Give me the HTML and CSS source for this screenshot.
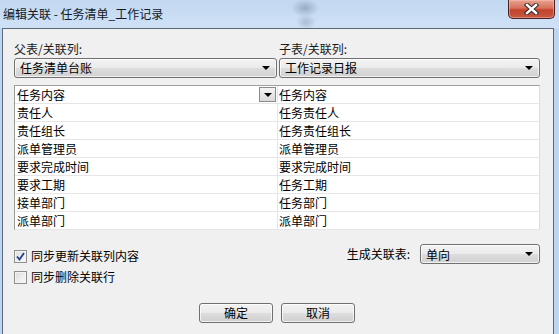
FILE: index.html
```html
<!DOCTYPE html>
<html lang="zh-CN">
<head>
  <meta charset="UTF-8" />
  <title>编辑关联</title>
  <link rel="stylesheet" href="styles.css">
</head>
<body>
  <div class="window">
    <div class="titlebar">
      <span class="title">编辑关联 - 任务清单_工作记录</span>
      <button class="close">
        <svg width="17" height="12" viewBox="0 0 17 12">
          <path d="M4 2 L13 10 M13 2 L4 10" stroke="#3a2a2a" stroke-width="4.4" stroke-linecap="square"/>
          <path d="M4 2 L13 10 M13 2 L4 10" stroke="#fff" stroke-width="2.4" stroke-linecap="square"/>
        </svg>
      </button>
    </div>

    <div class="client">
      <div class="pick">
        <div class="pick-col">
          <div class="lbl">父表/关联列:</div>
          <div class="combo"><span>任务清单台账</span><i class="arrow"></i></div>
        </div>
        <div class="pick-col">
          <div class="lbl">子表/关联列:</div>
          <div class="combo"><span>工作记录日报</span><i class="arrow"></i></div>
        </div>
      </div>

      <div class="map">
        <div class="cell first">任务内容<span class="mini"><i class="arrow"></i></span></div><div class="cell">任务内容</div>
        <div class="cell">责任人</div><div class="cell">任务责任人</div>
        <div class="cell">责任组长</div><div class="cell">任务责任组长</div>
        <div class="cell">派单管理员</div><div class="cell">派单管理员</div>
        <div class="cell">要求完成时间</div><div class="cell">要求完成时间</div>
        <div class="cell">要求工期</div><div class="cell">任务工期</div>
        <div class="cell">接单部门</div><div class="cell">任务部门</div>
        <div class="cell">派单部门</div><div class="cell">派单部门</div>
      </div>

      <div class="opts">
        <div class="checks">
          <label class="chk">
            <span class="box">
              <svg width="9" height="9" viewBox="0 0 9 9"><path d="M1 4.5 L3.5 7.5 L8 1" fill="none" stroke="#1f3f8f" stroke-width="1.8"/></svg>
            </span>同步更新关联列内容
          </label>
          <label class="chk"><span class="box"></span>同步删除关联行</label>
        </div>
        <div class="gen">
          <span>生成关联表:</span>
          <div class="combo narrow"><span>单向</span><i class="arrow"></i></div>
        </div>
      </div>

      <div class="buttons">
        <button class="btn">确定</button>
        <button class="btn">取消</button>
      </div>
    </div>
  </div>
</body>
</html>
```

FILE: styles.css
```css
* { margin: 0; padding: 0; box-sizing: border-box; }
body { font-family: "Noto Sans CJK SC", "Liberation Sans", sans-serif; font-size: 12px; color: #000; background: #bcd6f1; }

.window { width: 559px; height: 334px; display: flex; flex-direction: column; padding: 0 5px 0 2px; overflow: hidden;
  background:
    radial-gradient(ellipse 14px 9px at 305px 8px, rgba(70,85,110,0.35), rgba(70,85,110,0)),
    radial-gradient(ellipse 10px 8px at 306px 22px, rgba(70,85,110,0.25), rgba(70,85,110,0)),
    radial-gradient(ellipse 12px 8px at 535px 6px, rgba(70,85,110,0.2), rgba(70,85,110,0)),
    linear-gradient(#c2d8f1, #cfe1f6 28px, #bcd6f1 29px);
}

/* Title bar */
.titlebar { height: 28px; display: flex; justify-content: space-between; align-items: flex-start; }
.title { padding: 6px 0 0 1px; line-height: 16px; color: #101a28; }
.close { width: 47px; height: 19px; margin-right: -1px; border: 1px solid #4c2020; border-top: none; border-radius: 0 0 5px 5px;
  background: linear-gradient(#e6a391, #d7705b 45%, #c4432d 55%, #c65a42); display: flex; align-items: center; justify-content: center;
  box-shadow: inset 0 0 0 1px rgba(255,200,190,0.45); }

/* Client area */
.client { flex: 1; background: #f0f0f0; border: 1px solid #5c6878; border-bottom: none; padding: 12px 13px 0 11px; }

.pick { display: grid; grid-template-columns: 263px 1fr; gap: 2px; }
.lbl { line-height: 16px; height: 16px; margin-bottom: 1px; color: #1a1a1a; }

.combo { height: 20px; border: 1px solid #707070; border-radius: 3px; display: flex; align-items: center; justify-content: space-between;
  padding: 0 6px 0 5px; line-height: 16px;
  background: linear-gradient(#f3f3f3, #ebebeb 48%, #dddddd 52%, #d1d1d1);
  box-shadow: inset 0 0 0 1px rgba(255,255,255,0.7); }
.arrow { width: 0; height: 0; border-left: 4px solid transparent; border-right: 4px solid transparent; border-top: 4px solid #000; }

/* Mapping grid */
.map { margin-top: 7px; display: grid; grid-template-columns: 262px 1fr; column-gap: 1px; row-gap: 1px;
  background: #e6e6e6; border-top: 1px solid #a0a0a0; border-left: 1px solid #9a9a9a; border-right: 1px solid #dcdcdc; border-bottom: 1px solid #e6e6e6; }
.cell { background: #fff; height: 17px; line-height: 17px; padding-left: 2px; display: flex; justify-content: space-between; align-items: center; }
.cell:nth-child(even) { padding-left: 1px; }
.mini { width: 17px; height: 15px; margin-right: 1px; border: 1px solid #8a8a8a; display: flex; align-items: center; justify-content: center;
  background: linear-gradient(#f4f4f4, #dadada); }

/* Options */
.opts { display: flex; justify-content: space-between; margin-top: 14px; }
.checks { display: flex; flex-direction: column; gap: 5px; padding-top: 4px; }
.chk { display: flex; align-items: center; gap: 4px; line-height: 16px; }
.box { width: 13px; height: 13px; border: 1px solid #8e8f8f; display: flex; align-items: center; justify-content: center;
  background: linear-gradient(135deg, #dcdcdc, #fbfbfb); box-shadow: inset 0 0 0 1px #f4f4f4; }
.gen { display: flex; align-items: flex-start; gap: 10px; }
.gen span { line-height: 16px; padding-top: 2px; }
.combo.narrow { width: 120px; }

/* Buttons */
.buttons { display: flex; justify-content: center; gap: 8px; margin-top: 18px; }
.btn { width: 74px; height: 20px; border: 1px solid #707070; border-radius: 3px; font: inherit; line-height: 16px;
  background: linear-gradient(#f2f2f2, #ebebeb 48%, #dddddd 52%, #cfcfcf); box-shadow: inset 0 0 0 1px rgba(255,255,255,0.7); }
```
